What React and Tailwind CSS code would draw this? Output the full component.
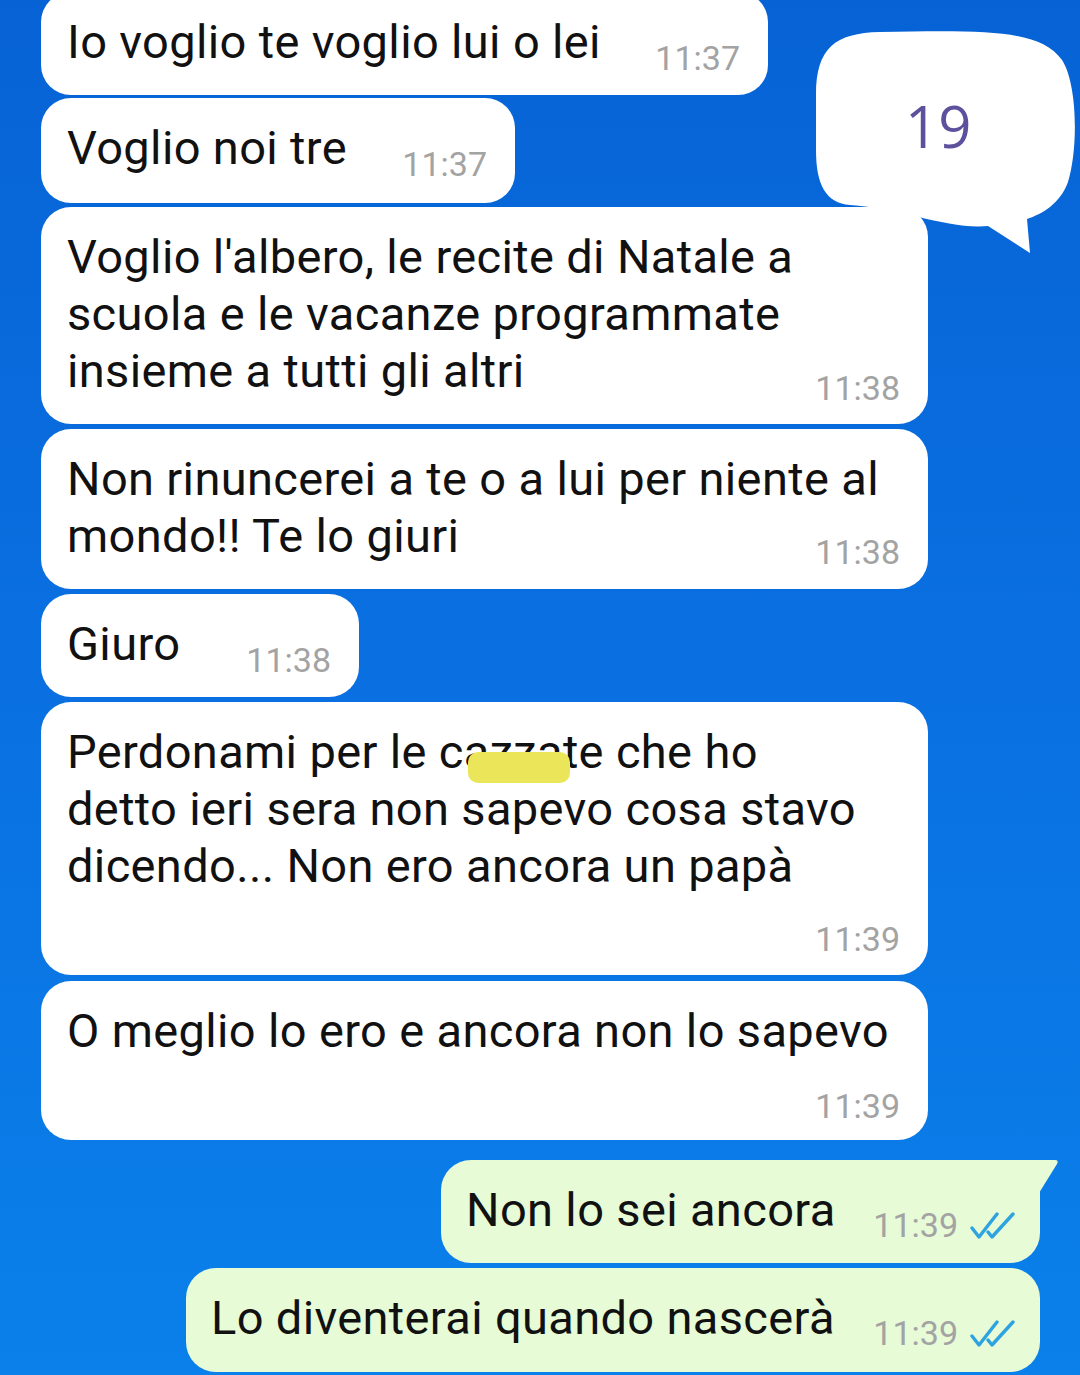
import React from 'react';

const Time = ({ children, className = '' }) => (
  <span className={`text-[34px] leading-[40px] text-[#a3a3a3] whitespace-nowrap ${className}`}>{children}</span>
);

const Ticks = () => (
  <svg width="46" height="28" viewBox="0 0 46 28" fill="none" stroke="#2ea3df" strokeWidth="3.4" strokeLinecap="round" strokeLinejoin="round">
    <path d="M2 17 L9 26 L27 3" />
    <path d="M18 21 L22 26 L43 3" />
  </svg>
);

const msg = 'text-[47px] tracking-[0.35px] leading-[57px] text-[#111] whitespace-nowrap';

function LeftLine({ className, text, time }) {
  return (
    <div className={`ml-[41px] bg-white rounded-[30px] flex justify-between items-start pl-[26px] pr-[28px] pt-[21px] ${className}`}>
      <span className={msg}>{text}</span>
      <Time className="mt-[25px]">{time}</Time>
    </div>
  );
}

function LeftBlock({ className, lines, time, timeGap }) {
  return (
    <div className={`ml-[41px] w-[887px] bg-white rounded-[30px] flex flex-col pl-[26px] pr-[28px] pt-[21px] ${className}`}>
      <p className={msg}>
        {lines.map((l, i) => (
          <React.Fragment key={i}>
            {l}
            {i < lines.length - 1 && <br />}
          </React.Fragment>
        ))}
      </p>
      <div className={`flex justify-end ${timeGap}`}>
        <Time>{time}</Time>
      </div>
    </div>
  );
}

function GreenLine({ className, text, tail }) {
  return (
    <div className={`relative mr-[40px] self-end bg-[#e6fbd6] rounded-[30px] flex justify-between items-start pl-[25px] pr-[24px] pt-[21px] ${tail ? 'rounded-tr-none' : ''} ${className}`}>
      <span className={msg}>{text}</span>
      <div className="flex items-center gap-[12px] mt-[24px]">
        <Time>11:39</Time>
        <Ticks />
      </div>
      {tail && (
        <svg className="absolute top-0 right-[-19px]" width="20" height="34" viewBox="0 0 20 34">
          <path d="M0 0 L16 0 Q20 0 18 4 L0 33 Z" fill="#e6fbd6" />
        </svg>
      )}
    </div>
  );
}

export default function App() {
  return (
    <div className="relative w-[1080px] h-[1375px] overflow-hidden bg-linear-to-b from-[#0763d5] via-[#0a70e1] to-[#0a80ea] font-['Roboto','Noto_Sans',sans-serif]">
      <div className="flex flex-col">
        <LeftLine className="mt-[-8px] w-[727px] h-[103px]" text="Io voglio te voglio lui o lei" time="11:37" />
        <LeftLine className="mt-[3px] w-[474px] h-[105px]" text="Voglio noi tre" time="11:37" />
        <LeftBlock
          className="mt-[4px] h-[217px]"
          lines={["Voglio l'albero, le recite di Natale a", 'scuola e le vacanze programmate', 'insieme a tutti gli altri']}
          time="11:38"
          timeGap="-mt-[31px]"
        />
        <LeftBlock
          className="mt-[5px] h-[160px]"
          lines={['Non rinuncerei a te o a lui per niente al', 'mondo!! Te lo giuri']}
          time="11:38"
          timeGap="-mt-[32px]"
        />
        <LeftLine className="mt-[5px] w-[318px] h-[103px]" text="Giuro" time="11:38" />
        <div className="mt-[5px] ml-[41px] w-[887px] h-[273px] bg-white rounded-[30px] flex flex-col pl-[26px] pr-[28px] pt-[21px]">
          <p className={msg}>
            Perdonami per le{' '}
            <span className="relative">
              cazzate
              <span className="absolute left-[29px] top-[28px] w-[102px] h-[31px] rounded-[10px] bg-[#ebe55a]" />
            </span>{' '}
            che ho
            <br />
            detto ieri sera non sapevo cosa stavo
            <br />
            dicendo... Non ero ancora un papà
          </p>
          <div className="flex justify-end mt-[25px]">
            <Time>11:39</Time>
          </div>
        </div>
        <LeftBlock
          className="mt-[6px] h-[159px]"
          lines={['O meglio lo ero e ancora non lo sapevo']}
          time="11:39"
          timeGap="mt-[27px]"
        />
        <GreenLine className="mt-[20px] w-[599px] h-[103px]" text="Non lo sei ancora" tail />
        <GreenLine className="mt-[5px] w-[854px] h-[104px]" text="Lo diventerai quando nascerà" />
      </div>

      <div className="absolute left-[810px] top-[25px] w-[270px] h-[235px]">
        <svg width="270" height="235" viewBox="810 25 270 235">
          <path
            d="M880 32 C990 30 1040 30 1062 60 C1078 85 1078 150 1068 182 C1060 204 1042 214 1027 219 L1030 253 L988 226 C950 230 900 208 850 205 C826 203 816 185 816 150 L816 95 C816 48 835 33 880 32 Z"
            fill="#ffffff"
          />
        </svg>
        <span className="absolute left-[95px] top-[66px] text-[58px] leading-[70px] text-[#5d519e] font-['Open_Sans',sans-serif]">19</span>
      </div>
    </div>
  );
}
